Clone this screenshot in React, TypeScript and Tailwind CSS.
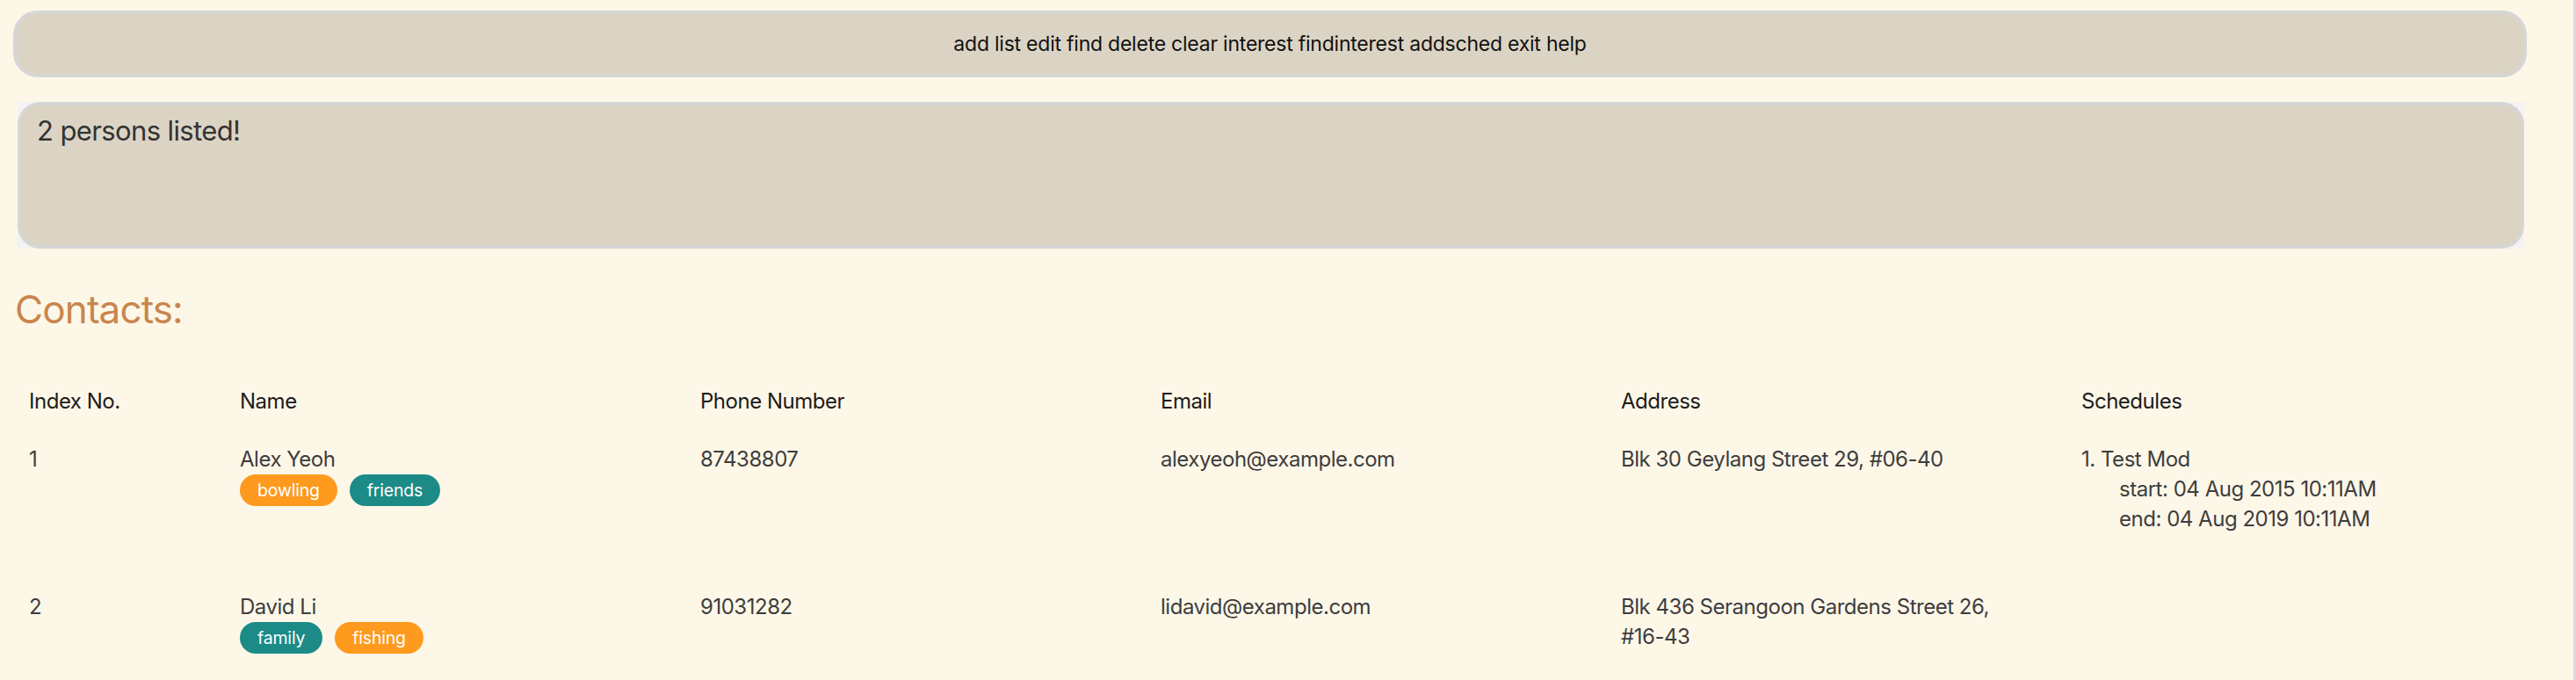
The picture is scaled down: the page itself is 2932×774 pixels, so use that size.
import React from "react";

const font = { fontFamily: "Inter, 'Noto Sans', sans-serif" };

function Tag({ label, color }: { label: string; color: "orange" | "teal" }) {
  return (
    <span
      className={
        "inline-block h-[36px] rounded-full px-[20px] text-[19.5px] leading-[36px] tracking-[-0.01em] text-white " +
        (color === "orange" ? "bg-[#fe9a1e]" : "bg-[#1c8b88]")
      }
    >
      {label}
    </span>
  );
}

export default function App() {
  return (
    <div
      style={font}
      className="min-h-[774px] w-full border-r-[3px] border-[#dadada] bg-[#fdf7e8] pt-[12px]"
    >
      {/* Command bar */}
      <div className="ml-[15px] mr-[53px] flex h-[76px] items-center justify-center rounded-[28px] border-[4px] border-[#d6d6d6] bg-[#dbd4c4]">
        <span className="text-[23px] leading-[30px] tracking-[-0.01em] text-[#111111]">
          add list edit find delete clear interest findinterest addsched exit help
        </span>
      </div>

      {/* Result box */}
      <div className="ml-[20px] mr-[56px] mt-[28px] bg-[#f3f3f3]">
        <div className="h-[167px] rounded-[26px] border-x-[3px] border-y-[4px] border-[#d6d6d6] bg-[#dbd4c4] pl-[19px] pt-[9px]">
          <div className="text-[31px] leading-[40px] tracking-[-0.02em] text-[#333333]">2 persons listed!</div>
        </div>
      </div>

      {/* Contacts heading */}
      <div className="ml-[17px] mt-[43px] text-[44px] leading-[52px] tracking-[-0.02em] text-[#c8864c]">
        Contacts:
      </div>

      {/* Table */}
      <div className="ml-[33px] mt-[62px] flex flex-col text-[24px] leading-[34px] tracking-[-0.02em]">
        <div className="flex text-[#1c1c1c]">
          <div className="w-[240px]">Index No.</div>
          <div className="w-[524px]">Name</div>
          <div className="w-[524px]">Phone Number</div>
          <div className="w-[524px]">Email</div>
          <div className="w-[524px]">Address</div>
          <div className="flex-1">Schedules</div>
        </div>

        <div className="mt-[32px] flex text-[#3d3d3d]">
          <div className="w-[240px]">1</div>
          <div className="w-[524px]">
            <div>Alex Yeoh</div>
            <div className="flex gap-[14px]">
              <Tag label="bowling" color="orange" />
              <Tag label="friends" color="teal" />
            </div>
          </div>
          <div className="w-[524px]">87438807</div>
          <div className="w-[524px]">alexyeoh@example.com</div>
          <div className="w-[524px]">
            <div className="max-w-[470px]">Blk 30 Geylang Street 29, #06-40</div>
          </div>
          <div className="flex-1">
            <div>1. Test Mod</div>
            <div className="pl-[43px]">start: 04 Aug 2015 10:11AM</div>
            <div className="pl-[43px]">end: 04 Aug 2019 10:11AM</div>
          </div>
        </div>

        <div className="mt-[66px] flex text-[#3d3d3d]">
          <div className="w-[240px]">2</div>
          <div className="w-[524px]">
            <div>David Li</div>
            <div className="flex gap-[14px]">
              <Tag label="family" color="teal" />
              <Tag label="fishing" color="orange" />
            </div>
          </div>
          <div className="w-[524px]">91031282</div>
          <div className="w-[524px]">lidavid@example.com</div>
          <div className="w-[524px]">
            <div className="max-w-[470px]">Blk 436 Serangoon Gardens Street 26, #16-43</div>
          </div>
          <div className="flex-1"></div>
        </div>
      </div>
    </div>
  );
}
